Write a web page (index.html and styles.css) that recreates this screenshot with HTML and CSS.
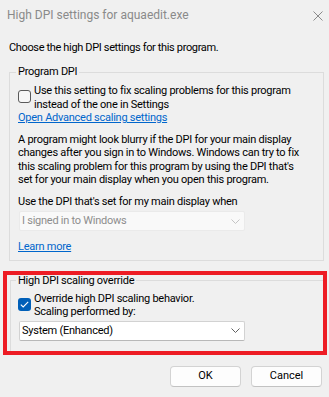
FILE: index.html
```
<!DOCTYPE html>
<html>
<head>
<meta charset="utf-8">
<link rel="stylesheet" href="styles.css">
</head>
<body>
<div class="titlebar">
  <span class="title">High DPI settings for aquaedit.exe</span>
  <svg class="close" width="10" height="10" viewBox="0 0 10 10"><path d="M0.5 0.5 L9.5 9.5 M9.5 0.5 L0.5 9.5" stroke="#8a8a8a" stroke-width="1" fill="none"/></svg>
</div>
<p class="intro">Choose the high DPI settings for this program.</p>
<fieldset class="group group-program">
  <legend class="legend">Program DPI</legend>
  <label class="check-row">
    <span class="checkbox"></span>
    <span class="check-text">Use this setting to fix scaling problems for this program<br>instead of the one in Settings</span>
  </label>
  <a class="link">Open Advanced scaling settings</a>
  <p class="para">A program might look blurry if the DPI for your main display<br>changes after you sign in to Windows. Windows can try to fix<br>this scaling problem for this program by using the DPI that's<br>set for your main display when you open this program.</p>
  <p class="label">Use the DPI that's set for my main display when</p>
  <div class="combo combo-disabled">
    <span>I signed in to Windows</span>
    <svg class="chev" width="9" height="5" viewBox="0 0 9 5"><path d="M0.5 0.5 L4.5 4.5 L8.5 0.5" stroke="#c4c4c4" stroke-width="1" fill="none"/></svg>
  </div>
  <a class="link learn">Learn more</a>
</fieldset>
<div class="highlight">
  <fieldset class="group group-override">
    <legend class="legend legend-tight">High DPI scaling override</legend>
    <label class="check-row check-row-2">
      <span class="checkbox checked"><svg width="9" height="7" viewBox="0 0 9 7"><path d="M0.8 3.6 L3.2 6 L8.2 0.9" stroke="#fff" stroke-width="1.1" fill="none"/></svg></span>
      <span class="check-text">Override high DPI scaling behavior.<br>Scaling performed by:</span>
    </label>
    <div class="combo combo-enabled">
      <span>System (Enhanced)</span>
      <svg class="chev" width="9" height="5" viewBox="0 0 9 5"><path d="M0.5 0.5 L4.5 4.5 L8.5 0.5" stroke="#606060" stroke-width="1" fill="none"/></svg>
    </div>
  </fieldset>
</div>
<div class="buttons">
  <button class="btn">OK</button>
  <button class="btn">Cancel</button>
</div>
</body>
</html>
```
FILE: styles.css
```
html, body {
  margin: 0;
  padding: 0;
}
body {
  background: #f0f0f0;
  font-family: Roboto, "Noto Sans", sans-serif;
  font-size: 11px;
  letter-spacing: -0.25px;
  line-height: 13.5px;
  color: #000;
  width: 329px;
  height: 397px;
  overflow: hidden;
}
.titlebar {
  height: 30px;
  display: flex;
  align-items: center;
  justify-content: space-between;
  padding: 0 6px 0 7px;
}
.title {
  color: #8a8a8a;
  font-size: 12px;
  letter-spacing: 0;
  line-height: 16px;
}
.close {
  display: block;
  margin-top: 2px;
}
.intro {
  margin: 10px 0 0 9px;
  line-height: 16px;
  letter-spacing: -0.35px;
}
.group {
  margin: 0;
  border: 1px solid #dcdcdc;
  min-width: 0;
}
.group-program {
  margin: 8px 5px 0 9px;
  padding: 4px 8px 6px 8px;
}
.legend {
  padding: 0 2px;
  margin-left: -2px;
  line-height: 16px;
}
.legend-tight {
  line-height: 12px;
}
.check-row {
  display: flex;
  align-items: flex-start;
  white-space: nowrap;
}
.checkbox {
  width: 11px;
  height: 11px;
  border: 1px solid #5a5a5a;
  border-radius: 3px;
  background: #f7f7f7;
  margin: 6px 3px 0 0;
  flex: none;
  display: flex;
  align-items: center;
  justify-content: center;
}
.checkbox.checked {
  width: 13px;
  height: 13px;
  border: 0;
  background: #005fb8;
}
.checkbox svg {
  display: block;
}
.link {
  display: block;
  width: max-content;
  color: #0066cc;
  text-decoration: underline;
  cursor: pointer;
}
.para {
  margin: 8px 0 0;
  white-space: nowrap;
}
.label {
  margin: 8px 0 0;
}
.combo {
  box-sizing: border-box;
  width: 226px;
  height: 20px;
  margin-left: 1px;
  display: flex;
  align-items: center;
  justify-content: space-between;
  padding: 0 4px 0 2px;
  border-radius: 2px;
}
.combo-disabled {
  margin-top: 3px;
  background: #f9f9f9;
  border: 1px solid #eaeaea;
  color: #8d8d8d;
}
.combo-enabled {
  margin-top: 2px;
  background: #fff;
  border: 1px solid #d2d2d2;
  border-bottom-color: #b8b8b8;
}
.chev {
  display: block;
}
.learn {
  margin-top: 9px;
}
.highlight {
  box-sizing: border-box;
  width: 324px;
  margin: 10px 0 0 3px;
  border: 4px solid #ed1c24;
}
.group-override {
  margin: 0 0 0 3px;
  padding: 5px 0 10px 7px;
  border-right: 0;
  border-bottom: 0;
}
.buttons {
  display: flex;
  justify-content: flex-end;
  gap: 10px;
  margin: 11px 7px 0 0;
}
.btn {
  box-sizing: border-box;
  width: 71px;
  height: 21px;
  padding: 0;
  font: inherit;
  color: #000;
  background: #fdfdfd;
  border: 1px solid #d3d3d3;
  border-bottom-color: #c2c2c2;
  border-radius: 4px;
}
```
